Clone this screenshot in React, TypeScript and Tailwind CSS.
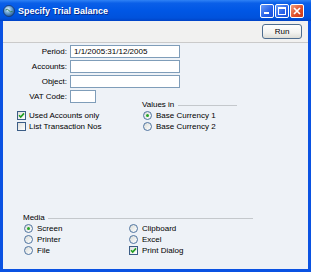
import React from "react";

function Radio({ checked }: { checked?: boolean }) {
  return (
    <span className="w-[9px] h-[9px] rounded-full border border-[#4f74a0] bg-[linear-gradient(135deg,#d9dcd8,#ffffff)] flex items-center justify-center shrink-0">
      {checked && <span className="w-[3px] h-[3px] rounded-full bg-[#27a527]" />}
    </span>
  );
}

function Check({ checked }: { checked?: boolean }) {
  return (
    <span className="w-[9px] h-[9px] border border-[#3b5d86] bg-[linear-gradient(135deg,#dedfdb,#ffffff)] flex items-center justify-center shrink-0">
      {checked && (
        <svg width="7" height="7" viewBox="0 0 7 7">
          <path d="M1 3.3 L2.7 5.1 L6 1.4" stroke="#1f9e1f" strokeWidth="1.6" fill="none" />
        </svg>
      )}
    </span>
  );
}

function Row({ children, gap = "gap-[4px]" }: { children: React.ReactNode; gap?: string }) {
  return <div className={`h-[11px] flex items-center ${gap} whitespace-nowrap`}>{children}</div>;
}

function Label({ children }: { children: React.ReactNode }) {
  return <div className="text-right leading-none whitespace-nowrap">{children}</div>;
}

function Field({ w, value }: { w: string; value?: string }) {
  return (
    <div className={`${w} h-[13px] bg-white border border-[#7f9db9] flex items-center pl-[3px] leading-none whitespace-nowrap`}>
      {value}
    </div>
  );
}

function TitleBar() {
  return (
    <div className="h-[21px] flex items-center bg-[linear-gradient(to_bottom,#2f82f5_0%,#0a5fe8_15%,#0057e5_50%,#0052dc_85%,#0043c6_100%)] pl-[3px] pr-[7px]">
      <svg width="12" height="12" viewBox="0 0 12 12" className="shrink-0">
        <defs>
          <radialGradient id="g" cx="0.4" cy="0.35" r="0.7">
            <stop offset="0" stopColor="#e8f4ff" />
            <stop offset="0.45" stopColor="#6fa8d8" />
            <stop offset="1" stopColor="#1d4f8c" />
          </radialGradient>
        </defs>
        <circle cx="6" cy="6" r="5.5" fill="url(#g)" stroke="#16356a" strokeWidth="0.8" />
        <path d="M2.5 5 Q5 3.5 6 5.5 T9.5 6.5" stroke="#2e7d5a" strokeWidth="1" fill="none" />
      </svg>
      <span className="ml-[3px] text-white font-bold text-[9px] leading-none mt-[2px] whitespace-nowrap [text-shadow:1px_1px_0_#0a2a8a]">
        Specify Trial Balance
      </span>
      <div className="ml-auto flex gap-[1px]">
        <div className="w-[14px] h-[14px] rounded-[2px] border border-white bg-[linear-gradient(135deg,#6a9cf8,#2560e8_60%,#1a4fd6)] flex items-end pl-[3px] pb-[3px]">
          <span className="w-[5px] h-[2px] bg-white" />
        </div>
        <div className="w-[14px] h-[14px] rounded-[2px] border border-white bg-[linear-gradient(135deg,#6a9cf8,#2560e8_60%,#1a4fd6)] flex items-center justify-center">
          <span className="w-[8px] h-[8px] border border-white border-t-2" />
        </div>
        <div className="w-[14px] h-[14px] rounded-[2px] border border-white bg-[linear-gradient(135deg,#f0a080,#e0502a_55%,#c8381a)] flex items-center justify-center">
          <svg width="8" height="8" viewBox="0 0 8 8">
            <path d="M1 1 L7 7 M7 1 L1 7" stroke="white" strokeWidth="1.7" />
          </svg>
        </div>
      </div>
    </div>
  );
}

export default function App() {
  return (
    <div className="w-[311px] h-[272px] flex flex-col bg-[#0a52e2] font-['Liberation_Sans',Arial,sans-serif] text-[8px] text-black">
      <TitleBar />
      <div className="flex-1 flex flex-col mx-[3px] mb-[3px] min-h-0">
        <div className="h-[22px] bg-[#f1f1f0] border-b border-[#cacaca] flex justify-end items-start pt-[3px] pr-[6px]">
          <div className="w-[40px] h-[15px] rounded-[3px] border border-[#4e6d8f] bg-[linear-gradient(to_bottom,#ffffff,#f2f2ef_60%,#dcdcd6)] flex items-center justify-center leading-none">
            Run
          </div>
        </div>
        <div className="flex-1 bg-[#eef2f7] flex flex-col pt-[2px] pb-[13px]">
          <div className="grid grid-cols-[64px_auto] gap-x-[3px] gap-y-[2px] items-center justify-start">
            <Label>Period:</Label>
            <Field w="w-[110px]" value="1/1/2005:31/12/2005" />
            <Label>Accounts:</Label>
            <Field w="w-[110px]" />
            <Label>Object:</Label>
            <Field w="w-[110px]" />
            <Label>VAT Code:</Label>
            <Field w="w-[26px]" />
          </div>
          <div className="flex mt-[-3px]">
            <div className="w-[139px] pl-[14px] pt-[10px] flex flex-col">
              <Row gap="gap-[3px]">
                <Check checked />
                <span className="leading-none">Used Accounts only</span>
              </Row>
              <Row gap="gap-[3px]">
                <Check />
                <span className="leading-none">List Transaction Nos</span>
              </Row>
            </div>
            <div className="flex flex-col">
              <div className="h-[10px] flex items-center whitespace-nowrap">
                <span className="leading-none">Values in</span>
                <span className="ml-[4px] w-[59px] h-[1px] bg-[#c4c8cc] mt-[1px]" />
              </div>
              <div className="pl-[1px]">
                <Row>
                  <Radio checked />
                  <span className="leading-none">Base Currency 1</span>
                </Row>
                <Row>
                  <Radio />
                  <span className="leading-none">Base Currency 2</span>
                </Row>
              </div>
            </div>
          </div>
          <div className="mt-auto flex flex-col">
            <div className="h-[10px] flex items-center pl-[20px] whitespace-nowrap">
              <span className="leading-none">Media</span>
              <span className="ml-[3px] w-[205px] h-[1px] bg-[#c4c8cc] mt-[1px]" />
            </div>
            <div className="pl-[21px] grid grid-cols-[105px_auto]">
              <Row>
                <Radio checked />
                <span className="leading-none">Screen</span>
              </Row>
              <Row>
                <Radio />
                <span className="leading-none">Clipboard</span>
              </Row>
              <Row>
                <Radio />
                <span className="leading-none">Printer</span>
              </Row>
              <Row>
                <Radio />
                <span className="leading-none">Excel</span>
              </Row>
              <Row>
                <Radio />
                <span className="leading-none">File</span>
              </Row>
              <Row>
                <Check checked />
                <span className="leading-none">Print Dialog</span>
              </Row>
            </div>
          </div>
        </div>
      </div>
    </div>
  );
}
